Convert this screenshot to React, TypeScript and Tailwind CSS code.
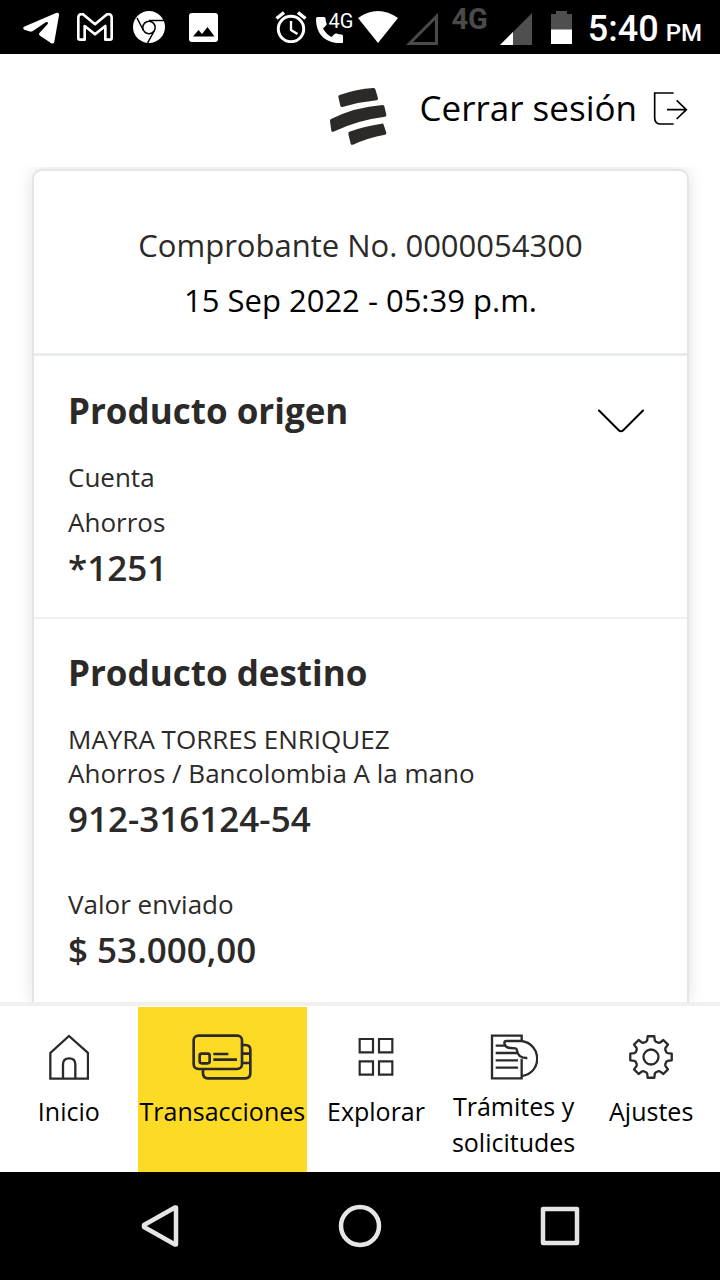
import React from "react";

const GEAR_PATH = (() => {
  const at = (deg: number, r: number) => {
    const a = (deg * Math.PI) / 180;
    return `${(Math.cos(a) * r).toFixed(2)} ${(Math.sin(a) * r).toFixed(2)}`;
  };
  const parts: string[] = [];
  for (let i = 0; i < 8; i++) {
    const c = i * 45;
    parts.push(`${i === 0 ? "M" : "L"}${at(c - 18, 16)}`);
    parts.push(`L${at(c - 13, 17)}`);
    parts.push(`L${at(c - 9, 21)}`);
    parts.push(`L${at(c + 9, 21)}`);
    parts.push(`L${at(c + 13, 17)}`);
    parts.push(`L${at(c + 18, 16)}`);
  }
  return parts.join("") + "Z";
})();

function StatusBar() {
  return (
    <div className="flex h-[54px] shrink-0 items-center justify-between bg-black pr-[18px] pl-[23px] font-[Roboto,sans-serif] text-white">
      <div className="flex items-center gap-5">
        <svg className="mt-0.5 h-8 w-9" viewBox="69 37 108 96" fill="#fff" aria-hidden="true">
          <path d="M72 81 168 40q10-3 9 7l-14 79q-2 8-9 5l-34-23q-6-4-1-9l24-26q3-8-6-5L99 94q-6 3-12 1L73 90q-6-3-1-9Z" />
        </svg>
        <svg className="-ml-0.5 h-7 w-9" viewBox="231 37 108 84" fill="none" stroke="#fff" strokeWidth="8" strokeLinejoin="round" aria-hidden="true">
          <path d="M235 50v62q0 5 5 5h14V76l31 25 31-25v41h14q5 0 5-5V50q-1-12-14-9l-36 30-36-30q-13-3-14 9Z" />
        </svg>
        <svg className="h-8 w-8" viewBox="0 0 32 32" aria-hidden="true">
          <circle cx="16" cy="16" r="16" fill="#fff" />
          <g fill="none" stroke="#000" strokeWidth="1.500">
            <circle cx="16" cy="16.500" r="6.200" />
            <path d="M16 9.500H31M10.500 19.500 4 7M21.500 19.500 14.500 32" />
          </g>
        </svg>
        <svg className="ml-1 h-[29px] w-[29px]" viewBox="0 0 29 29" aria-hidden="true">
          <rect width="29" height="29" rx="3" fill="#fff" />
          <path d="M4 23.500 9.500 17l3.500 4 5.500-7 7 9.500Z" fill="#000" />
        </svg>
      </div>
      <div className="flex items-center">
        <svg className="h-8 w-8" viewBox="0 0 32 32" fill="none" stroke="#fff" aria-hidden="true">
          <circle cx="16" cy="18" r="12.700" strokeWidth="3" />
          <path d="M1.500 7.500 9 1.500M30.500 7.500 23 1.500" strokeWidth="3.500" />
          <path d="M16 10v9l6.500 4" strokeWidth="2.300" />
        </svg>
        <div className="relative ml-[9px] h-8 w-[34px]">
          <svg className="h-8 w-[34px]" viewBox="0 0 34 32" fill="#fff" aria-hidden="true">
            <path d="M1.500 6H8Q9.500 6 9.500 7.500q.2 3 1 5 .4 1.200-.5 2l-3 3q3.500 6 8.500 8.500l3-3q.8-.8 2-.4 2.500.9 5 1 1.500 0 1.500 1.500V31q0 1.500-1.500 1.500Q0 31.500 0 7.500 0 6 1.500 6Z" />
          </svg>
          <span className="absolute -top-0.5 left-3 text-xl leading-6">4G</span>
        </div>
        <svg className="ml-2 h-8 w-10" viewBox="0 0 40 32" fill="#fff" aria-hidden="true">
          <path d="M20 32 0 7Q20-7 40 7Z" />
        </svg>
        <svg className="mt-1 ml-2 h-8 w-8" viewBox="0 0 32 32" fill="none" stroke="#4a4a4a" strokeWidth="3" aria-hidden="true">
          <path d="M3.500 30.500H30.500V3.500Z" />
        </svg>
        <span className="mb-4 ml-[13px] text-[29px] leading-7 font-bold text-[#4a4a4a]">4G</span>
        <svg className="mt-1 ml-3 h-8 w-8" viewBox="0 0 32 32" aria-hidden="true">
          <path d="M0 32H32V0Z" fill="#4f4f4f" />
          <path d="M0 32H13V19Z" fill="#fff" />
        </svg>
        <svg className="ml-[19px] h-[33px] w-[21px]" viewBox="0 0 21 33" aria-hidden="true">
          <path d="M0 19V3H5V0H16V3H21V19Z" fill="#4f4f4f" />
          <path d="M0 18.500H21V33H0Z" fill="#fff" />
        </svg>
        <time className="mt-1 ml-4 flex items-baseline gap-[7px] font-medium">
          <span className="text-4xl">5:40</span>
          <span className="text-2xl">PM</span>
        </time>
      </div>
    </div>
  );
}

function Header() {
  return (
    <header className="flex h-[113px] shrink-0 items-center justify-end pr-8">
      <svg className="mt-3 h-[59px] w-[58px]" viewBox="63 51 174 177" fill="#2c2a29" aria-label="Bancolombia" role="img">
        <path d="M95 75Q145 57 196 54q5 0 6 4l8 27q1 5-4 6-52 5-103 20-5 1-6-4l-6-26q-1-4 4-6Z" />
        <path d="M69 147Q142 111 223 105q5 0 6 4l6 25q1 5-4 6-82 10-155 45-5 2-6-3l-4-28q-1-5 3-7Z" />
        <path d="M124 185Q170 168 221 161q5-1 6 3l8 24q1 5-4 6-51 9-96 30-5 2-7-3l-7-29q-1-5 3-7Z" />
      </svg>
      <button type="button" className="mb-1 ml-8 flex items-center gap-4 text-black">
        <span className="text-[35px]">Cerrar sesión</span>
        <svg className="h-[35px] w-[35px]" viewBox="1030 60 105 105" fill="none" stroke="#000" strokeWidth="5" aria-hidden="true">
          <path d="M1092 66H1035V140q0 19 19 19H1092M1072 116H1130M1101 88l29 28-29 28" />
        </svg>
      </button>
    </header>
  );
}

function Receipt() {
  return (
    <main className="flex min-h-0 flex-1 flex-col overflow-hidden pr-[31px] pl-8 pt-0.5">
      <article className="flex-1 rounded-t-[10px] border-2 border-b-0 border-[#e8e4e5] bg-white text-[26px] leading-[34px] text-[#2c2a29] shadow-[0_0_16px_rgba(0,0,0,0.12)]">
        <div className="border-b-[3px] border-[#e9ecee] pt-[47px] pb-[25px] text-center text-[31px] leading-[55px]">
          <p>Comprobante No. 0000054300</p>
          <p className="text-black">15 Sep 2022 - 05:39 p.m.</p>
        </div>
        <section className="border-b-2 border-[#f0f0f0] px-[34px] pt-[33px] pb-[27px]">
          <div className="flex items-center justify-between">
            <h2 className="text-[35px] leading-[44px] font-bold">Producto origen</h2>
            <button type="button" aria-label="Contraer producto origen" className="mt-5 mr-2">
              <svg className="h-6 w-12" viewBox="0 0 48 24" fill="none" stroke="#000" strokeWidth="2" strokeLinecap="round" aria-hidden="true">
                <path d="M2 1.500 21.500 21q2.500 2.500 5 0L46 1.500" />
              </svg>
            </button>
          </div>
          <p className="mt-[27px]">Cuenta</p>
          <p className="mt-[11px]">Ahorros</p>
          <p className="mt-[7px] text-[35px] leading-[44px] font-semibold">*1251</p>
        </section>
        <section className="px-[34px] pt-8">
          <h2 className="text-[35px] leading-[44px] font-bold">Producto destino</h2>
          <p className="mt-[27px]">MAYRA TORRES ENRIQUEZ</p>
          <p>Ahorros / Bancolombia A la mano</p>
          <p className="mt-[7px] text-[35px] leading-[44px] font-semibold">912-316124-54</p>
          <p className="mt-[46px]">Valor enviado</p>
          <p className="mt-[7px] text-[35px] leading-[44px] font-semibold">$ 53.000,00</p>
        </section>
      </article>
    </main>
  );
}

function TabBar() {
  const item = "flex flex-1 flex-col items-center pt-[25px]";
  const icon = "mt-0.5 mb-2 h-[46px]";
  const single = "leading-[46px]";
  return (
    <nav className="shrink-0 border-t-4 border-[#f0f0f0] bg-white pt-px text-[25px] text-black">
      <div className="flex h-[165px] items-stretch">
        <a href="#inicio" className={item}>
          <svg className={`${icon} w-10`} viewBox="145 131 120 138" fill="none" stroke="#2c2a29" strokeWidth="7" aria-hidden="true">
            <path d="M205 137 262 188V265H149V188ZM187 265V222q0-18 18.500-18T224 222V265" />
          </svg>
          <span className={single}>Inicio</span>
        </a>
        <a href="#transacciones" aria-current="page" className={`${item} bg-[#fdda24] px-0.5`}>
          <svg className={`${icon} w-[60px]`} viewBox="577 135 180 138" fill="none" stroke="#2c2a29" strokeWidth="8" aria-hidden="true">
            <rect x="582" y="140" width="145" height="100" rx="14" />
            <path d="M727 168H737q15 0 15 15V253q0 15-15 15H625q-15 0-15-15V241M727 194H752M727 222H752M641 195H686M641 212H712" />
            <rect x="600" y="194" width="30" height="29" rx="6" />
          </svg>
          <span className={single}>Transacciones</span>
        </a>
        <a href="#explorar" className={item}>
          <svg className={`${icon} w-9`} viewBox="141 131 108 138" fill="none" stroke="#2c2a29" strokeWidth="6.500" aria-hidden="true">
            <path d="M146 146h40v40h-40ZM204 146h40v40h-40ZM146 213h40v40h-40ZM204 213h40v40h-40Z" />
          </svg>
          <span className={single}>Explorar</span>
        </a>
        <a href="#tramites" className={item}>
          <svg className={`${icon} w-12`} viewBox="543 131 144 138" fill="none" stroke="#2c2a29" strokeWidth="7" aria-hidden="true">
            <path d="M638 152V136H549V264H638V205M560 166H590M560 188H624M560 210H627M560 232H627" />
            <path d="M638 152H592q-6 0-6 6 2 14 18 15l16 1q4 1 4 7 3 23 31 22M638 152c62 10 62 97 0 105" />
          </svg>
          <span className="text-center leading-9">
            Trámites y<br />solicitudes
          </span>
        </a>
        <a href="#ajustes" className={item}>
          <svg className={`${icon} w-[46px]`} viewBox="-23 -23 46 46" fill="none" stroke="#2c2a29" strokeWidth="2.300" strokeLinejoin="round" aria-hidden="true">
            <path d={GEAR_PATH} />
            <circle r="7.500" />
          </svg>
          <span className={single}>Ajustes</span>
        </a>
      </div>
    </nav>
  );
}

function SystemNav() {
  const button = "flex items-center justify-center";
  return (
    <div className="grid h-[108px] shrink-0 grid-cols-3 bg-black px-[60px]">
      <button type="button" aria-label="Atrás" className={button}>
        <svg className="h-11 w-11" viewBox="0 0 44 44" fill="none" stroke="#e6e6e6" strokeWidth="4.500" strokeLinejoin="round" aria-hidden="true">
          <path d="M38 3.500V40.500H37L6 23V21L37 3.500Z" />
        </svg>
      </button>
      <button type="button" aria-label="Página principal" className={button}>
        <svg className="h-11 w-11" viewBox="0 0 44 44" fill="none" stroke="#e6e6e6" strokeWidth="4.500" aria-hidden="true">
          <circle cx="22" cy="22" r="19" />
        </svg>
      </button>
      <button type="button" aria-label="Recientes" className={button}>
        <svg className="h-11 w-11" viewBox="0 0 44 44" fill="none" stroke="#e6e6e6" strokeWidth="4.500" strokeLinejoin="round" aria-hidden="true">
          <rect x="5" y="5" width="34" height="34" />
        </svg>
      </button>
    </div>
  );
}

export default function App() {
  return (
    <div className="flex h-dvh flex-col overflow-hidden bg-white font-['Open_Sans','Noto_Sans',sans-serif]">
      <StatusBar />
      <Header />
      <Receipt />
      <TabBar />
      <SystemNav />
    </div>
  );
}
